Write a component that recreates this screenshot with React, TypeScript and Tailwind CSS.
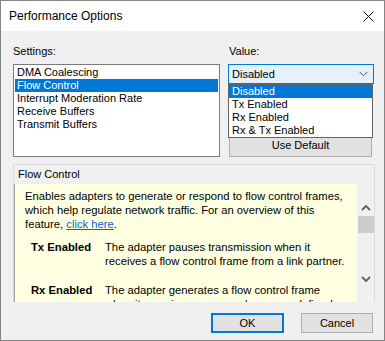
import React from "react";

const settings = [
  "DMA Coalescing",
  "Flow Control",
  "Interrupt Moderation Rate",
  "Receive Buffers",
  "Transmit Buffers",
];

const values = ["Disabled", "Tx Enabled", "Rx Enabled", "Rx & Tx Enabled"];

const font = { fontFamily: '"Liberation Sans", Arial, sans-serif' };

const Chevron = ({ up }: { up?: boolean }) => (
  <svg width="10" height="7" viewBox="0 0 10 7" className="block">
    <path
      d={up ? "M1 6 L5 2 L9 6" : "M1 1 L5 5 L9 1"}
      fill="none"
      stroke="#606060"
      strokeWidth="1.8"
    />
  </svg>
);

export default function App() {
  const selected = "Flow Control";
  const value = "Disabled";

  return (
    <div
      className="w-[385px] h-[341px] border border-[#858585] bg-[#f0f0f0] flex flex-col text-black text-[11px] overflow-hidden"
      style={font}
    >
      {/* title bar */}
      <div className="h-[30px] bg-white flex items-center justify-between pl-[8px] pr-[10px] shrink-0">
        <span className="text-[12px]">Performance Options</span>
        <svg width="11" height="11" viewBox="0 0 11 11">
          <path d="M0.5 0.5 L10.5 10.5 M10.5 0.5 L0.5 10.5" stroke="#111" strokeWidth="1" />
        </svg>
      </div>

      <div className="flex gap-[8px] pl-[12px] pt-[13px] shrink-0">
        <div className="flex flex-col w-[207px]">
          <span className="leading-[14px] h-[20px]">Settings:</span>
          <div className="h-[93px] border border-[#7a7a7a] bg-white pt-[1px] px-[1px]">
            {settings.map((s) => (
              <div
                key={s}
                className={`h-[13px] leading-[13px] pl-[2px] ${
                  s === selected ? "bg-[#0078d7] text-white" : ""
                }`}
              >
                {s}
              </div>
            ))}
          </div>
        </div>

        <div className="flex flex-col w-[146px]">
          <span className="leading-[14px] h-[20px] pl-[1px]">Value:</span>
          <div className="relative">
            <div className="h-[20px] border border-[#0078d7] bg-[#e5f1fb] flex items-center justify-between pl-[3px] pr-[5px]">
              <span>{value}</span>
              <svg width="9" height="6" viewBox="0 0 9 6">
                <path d="M0.5 0.8 L4.5 4.8 L8.5 0.8" fill="none" stroke="#555" strokeWidth="1" />
              </svg>
            </div>
            <div className="absolute top-[20px] left-0 w-[145px] border border-[#646464] bg-white z-10">
              {values.map((v) => (
                <div
                  key={v}
                  className={`h-[13px] leading-[13px] pl-[3px] ${
                    v === value ? "bg-[#0078d7] text-white" : ""
                  }`}
                >
                  {v}
                </div>
              ))}
            </div>
            <button className="mt-[50px] ml-[1px] w-[143px] h-[23px] border border-[#adadad] bg-[#e1e1e1] text-[11px]">
              Use Default
            </button>
          </div>
        </div>
      </div>

      {/* description group */}
      <div className="ml-[12px] mt-[7px] w-[362px] border-t border-x border-[#dadada] shrink-0">
        <div className="h-[19px] leading-[19px] pl-[4px] text-[11px]">Flow Control</div>
        <div className="flex h-[118px]">
          <div className="w-[344px] bg-[#ffffe1] border-l border-[#a0a0a0] overflow-hidden pl-[10px] pr-[12px] pt-[5px] text-[11.25px] leading-[14px]">
            <p>
              Enables adapters to generate or respond to flow control frames,
              which help regulate network traffic. For an overview of this
              feature,{" "}
              <span className="text-[#0066cc] underline">click here</span>.
            </p>
            <div className="grid grid-cols-[74px_244px] mt-[9px] gap-y-[15px] pl-[6px]">
              <span className="font-bold">Tx Enabled</span>
              <span>
                The adapter pauses transmission when it receives a flow
                control frame from a link partner.
              </span>
              <span className="font-bold">Rx Enabled</span>
              <span>
                The adapter generates a flow control frame when its receive
                queue reaches a pre-defined limit.
              </span>
            </div>
          </div>
          <div className="w-[17px] flex flex-col items-center">
            <div className="mt-[20px]">
              <Chevron up />
            </div>
            <div className="mt-[5px] w-[16px] h-[17px] bg-[#cdcdcd]" />
            <div className="mt-[43px]">
              <Chevron />
            </div>
          </div>
        </div>
      </div>

      <div className="flex justify-end gap-[17px] pr-[11px] mt-[11px]">
        <button className="w-[73px] h-[20px] border-2 border-[#0078d7] bg-[#e1e1e1]">OK</button>
        <button className="w-[72px] h-[20px] border border-[#adadad] bg-[#e1e1e1]">Cancel</button>
      </div>
    </div>
  );
}
